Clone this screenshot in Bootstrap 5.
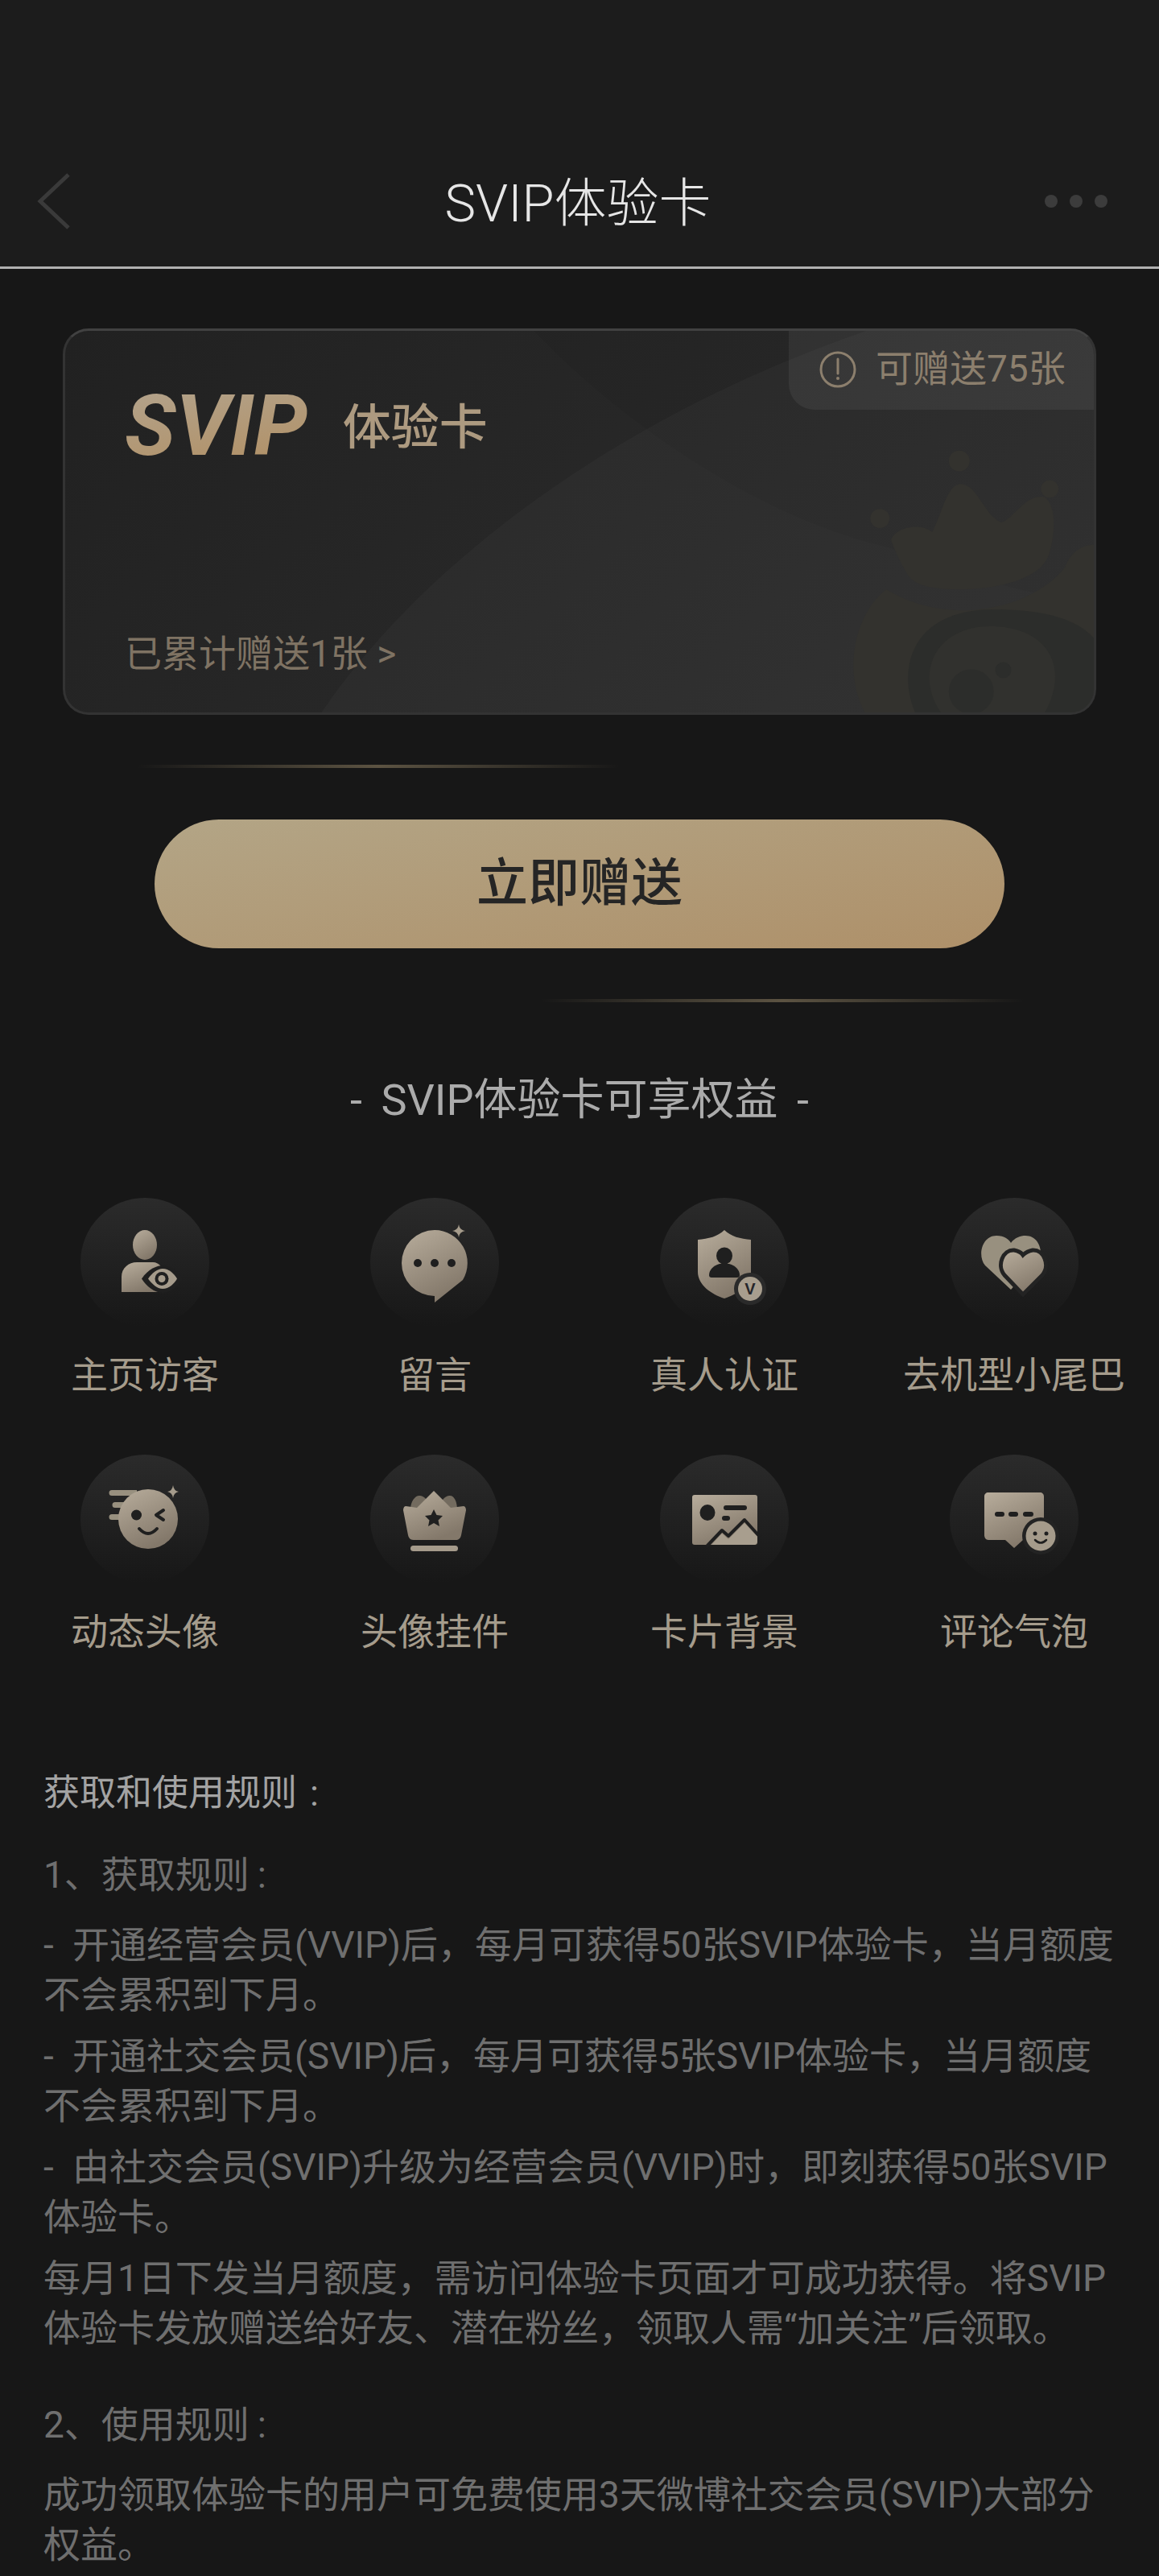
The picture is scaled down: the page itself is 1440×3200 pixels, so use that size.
<!DOCTYPE html>
<html lang="zh-CN">
<head>
  <meta charset="UTF-8" />
  <meta name="viewport" content="width=device-width, initial-scale=1" />
  <title>SVIP体验卡</title>
  <link href="https://cdn.jsdelivr.net/npm/bootstrap@5.3.0/dist/css/bootstrap.min.css" rel="stylesheet" />
  <style>
    html, body { background: #171717; }
    body {
      width: 1440px;
      height: 3200px;
      overflow: hidden;
      font-family: Roboto, "Noto Sans CJK SC", sans-serif;
    }

    .top-bar {
      height: 334px;
      padding: 168px 64px 0 46px;
      background: #1c1c1c;
      border-bottom: 3px solid #b0b0b0;
    }
    .top-side { width: 110px; }
    .top-side-end { width: 96px; }
    .top-title { margin-top: 8px; font-size: 65px; font-weight: 300; color: #e6e6e6; line-height: 1; }
    .more-dot { width: 16px; height: 16px; border-radius: 50%; background: #3c3c3c; }
    .more-row { gap: 15px; }

    .gift-card {
      height: 480px;
      margin: 74px 78px 0;
      border: 3px solid #333;
      border-top-color: #414141;
      border-radius: 32px;
      background: linear-gradient(135deg, #212121, #2e2e2e);
      overflow: hidden;
    }
    .card-art { inset: 0; width: 100%; height: 100%; }
    .card-body-in { height: 100%; padding: 0 0 0 74px; }
    .svip-logo {
      font-family: Roboto, sans-serif;
      font-style: italic;
      font-weight: 700;
      font-size: 106px;
      line-height: 1;
      background: linear-gradient(170deg, #b3a48e, #b18f63);
      -webkit-background-clip: text;
      background-clip: text;
      color: transparent;
    }
    .card-name { margin-top: 6px; font-size: 60px; font-weight: 500; color: #ad9a80; line-height: 1; }
    .card-head { margin-top: 65px; gap: 44px; }
    .card-sent { font-size: 46px; color: #7f7363; line-height: 1; margin-top: auto; margin-bottom: 50px; }
    .left-badge {
      top: -3px;
      right: -3px;
      width: 382px;
      height: 101px;
      padding-left: 38px;
      gap: 24px;
      background: rgba(255, 255, 255, .06);
      border-radius: 0 32px 0 32px;
      font-size: 46px;
      color: #8c7f6d;
    }

    .gold-rule { height: 4px; width: 600px; background: linear-gradient(90deg, transparent, #5c5342, transparent); }
    .rule-one { margin: 62px 0 0 170px; }
    .rule-two { margin: 63px 0 0 672px; }

    .send-btn {
      display: block;
      width: 1056px;
      height: 160px;
      margin: 64px 0 0 192px;
      border: 0;
      border-radius: 80px;
      background: linear-gradient(170deg, #b3a586, #ae9069);
      font-size: 64px;
      font-weight: 500;
      color: #252525;
    }

    .perks-title { margin-top: 95px; font-size: 54px; line-height: 1; color: #ababab; word-spacing: 10px; }
    .perk-grid { display: grid; grid-template-columns: repeat(4, 360px); grid-auto-rows: 319px; margin-top: 94px; }
    .perk-disc {
      width: 160px;
      height: 160px;
      border-radius: 50%;
      background: linear-gradient(180deg, #2b2b2b, #171717);
    }
    .perk-name { margin-top: 33px; font-size: 46px; line-height: 1.2; color: #a59c8c; white-space: nowrap; }

    .rules { padding: 0 0 0 54px; margin-top: 71px; font-size: 46px; line-height: 62px; color: #6f6f6f; white-space: nowrap; word-spacing: 12px; }
    .rules-title { color: #a3a3a3; font-size: 45px; }
    .rules p { margin: 0; }
    .colon-gap { margin-left: 10px; }
    .rules-title .colon-gap { margin-left: 16px; }
    .gap-a { margin-top: 39px !important; }
    .gap-b { margin-top: 25px !important; }
    .gap-c { margin-top: 14px !important; }
    .gap-d { margin-top: 58px !important; }
  </style>
</head>
<body>

  <svg width="0" height="0" class="position-absolute">
    <defs>
      <linearGradient id="gold" x1="0" y1="0" x2="0.5" y2="1">
        <stop offset="0" stop-color="#b8ad9c" />
        <stop offset="1" stop-color="#83786a" />
      </linearGradient>
    </defs>
  </svg>

  <header class="top-bar d-flex justify-content-between align-items-center">
    <div class="top-side">
      <svg width="42" height="72" viewBox="0 0 42 72" class="d-block"><path d="M39 3 L4 36 L39 69" fill="none" stroke="#3a3a3a" stroke-width="5" /></svg>
    </div>
    <div class="top-title">SVIP体验卡</div>
    <div class="top-side-end d-flex justify-content-end more-row">
      <span class="more-dot"></span><span class="more-dot"></span><span class="more-dot"></span>
    </div>
  </header>

  <section class="gift-card position-relative">
    <svg class="card-art position-absolute" viewBox="0 0 1284 478" preserveAspectRatio="none">
      <path d="M320 478 C440 300 680 110 1000 0 L1284 0 L1284 478 Z" fill="#fff" fill-opacity=".028" />
      <path d="M585 0 C680 100 850 230 1030 272 C1130 310 1220 335 1284 340 L1284 0 Z" fill="#000" fill-opacity=".04" />
      <g fill="#33322e">
        <circle cx="1116" cy="163" r="13" />
        <circle cx="1229" cy="198" r="11" />
        <circle cx="1017" cy="235" r="12" />
        <path d="M1031 262 C1036 246 1068 240 1082 252 C1094 232 1100 194 1116 192 C1138 190 1146 230 1168 240 C1182 238 1198 204 1222 208 C1240 220 1234 262 1228 280 C1218 310 1170 322 1120 324 C1080 324 1060 318 1052 306 C1044 292 1036 278 1031 262 Z" />
        <path d="M998 478 C968 420 990 350 1025 324 C1045 336 1080 352 1130 350 C1190 346 1230 320 1248 296 C1256 276 1270 268 1284 268 L1284 478 Z" />
      </g>
      <path d="M1061 478 C1040 430 1050 350 1158 349 C1220 349 1262 360 1284 385 L1284 478 Z" fill="#2c2d2b" />
      <path d="M1093 478 C1060 430 1085 370 1155 370 C1225 370 1255 420 1223 478 Z" fill="#31312e" />
      <circle cx="1131" cy="452" r="28" fill="#2c2d2b" />
      <circle cx="1171" cy="425" r="10" fill="#2c2d2b" />
    </svg>

    <div class="left-badge position-absolute d-flex align-items-center">
      <svg width="46" height="46" viewBox="0 0 46 46" class="flex-shrink-0">
        <circle cx="23" cy="23" r="21" fill="none" stroke="#8c7f6d" stroke-width="3" />
        <path d="M23 10 V28" stroke="#8c7f6d" stroke-width="3" stroke-linecap="round" />
        <circle cx="23" cy="34" r="2" fill="#8c7f6d" />
      </svg>
      <span>可赠送75张</span>
    </div>

    <div class="card-body-in position-relative d-flex flex-column">
      <div class="card-head d-flex align-items-center">
        <span class="svip-logo">SVIP</span>
        <span class="card-name">体验卡</span>
      </div>
      <div class="card-sent">已累计赠送1张 &gt;</div>
    </div>
  </section>

  <div class="gold-rule rule-one"></div>
  <button class="send-btn" type="button">立即赠送</button>
  <div class="gold-rule rule-two"></div>

  <h2 class="perks-title fw-normal text-center">- SVIP体验卡可享权益 -</h2>

  <div class="perk-grid">
    <div class="d-flex flex-column align-items-center">
      <div class="perk-disc">
        <svg width="160" height="160" viewBox="0 0 160 160">
          <ellipse cx="80" cy="58.500" rx="15" ry="18.500" fill="url(#gold)" />
          <path d="M51 117 V98 C51 87 60 80 70 80 H90 C98 80 104 88 104 98 V117 Z" fill="url(#gold)" />
          <path d="M76 100.500 C84 88 96 84 102 84 C112 84 122 92 127 100.500 C122 110 112 118 102 118 C92 118 82 110 76 100.500 Z" fill="#1f1f1f" />
          <path d="M84 100.500 C89 93 96 88 102 88 C110 88 116 94 120 100.500 C116 107 110 113 102 113 C95 113 89 107 84 100.500 Z" fill="#a59b8b" />
          <circle cx="101" cy="100.500" r="8.500" fill="#1f1f1f" />
          <circle cx="101" cy="100.500" r="4.500" fill="#a59b8b" />
        </svg>
      </div>
      <div class="perk-name">主页访客</div>
    </div>

    <div class="d-flex flex-column align-items-center">
      <div class="perk-disc">
        <svg width="160" height="160" viewBox="0 0 160 160">
          <path d="M80 40 A41 41 0 0 1 115 102 L80 130 V122 A41 41 0 0 1 80 40 Z" fill="url(#gold)" />
          <circle cx="59" cy="81" r="5" fill="#1f1f1f" />
          <circle cx="80" cy="81" r="5" fill="#1f1f1f" />
          <circle cx="101" cy="81" r="5" fill="#1f1f1f" />
          <path d="M110 33 Q111 40 118 41 Q111 42 110 49 Q109 42 102 41 Q109 40 110 33 Z" fill="#a59b8b" />
        </svg>
      </div>
      <div class="perk-name">留言</div>
    </div>

    <div class="d-flex flex-column align-items-center">
      <div class="perk-disc">
        <svg width="160" height="160" viewBox="0 0 160 160">
          <path d="M80 40 C88 48 100 51 113 52 V92 C113 108 96 120 80 125 C64 120 47 108 47 92 V52 C60 51 72 48 80 40 Z" fill="url(#gold)" />
          <ellipse cx="80" cy="72" rx="10" ry="10.500" fill="#1f1f1f" />
          <path d="M61 96 C61 90 66 84 74 82 H86 C94 84 99 90 99 96 C99 98 98 99 96 99 H64 C62 99 61 98 61 96 Z" fill="#1f1f1f" />
          <circle cx="112" cy="113" r="20" fill="#2a2a2a" />
          <circle cx="112" cy="113" r="15" fill="#a89e8e" />
          <text x="112" y="120" text-anchor="middle" font-family="Liberation Sans, sans-serif" font-weight="700" font-size="20" fill="#26262a">V</text>
        </svg>
      </div>
      <div class="perk-name">真人认证</div>
    </div>

    <div class="d-flex flex-column align-items-center">
      <div class="perk-disc">
        <svg width="160" height="160" viewBox="0 0 160 160">
          <path d="M76 114 L44 84 C34 72 40 47 58 47 C68 47 74 52 76 56 C79 52 85 47 94 47 C108 47 114 60 113 72 Z" fill="#98907f" />
          <path d="M91 120 L68 96 C58 84 66 64 80 65 C85 66 89 68 91 71 C94 68 98 66 103 65 C117 64 125 84 115 96 Z" fill="url(#gold)" stroke="#232323" stroke-width="5" />
        </svg>
      </div>
      <div class="perk-name">去机型小尾巴</div>
    </div>

    <div class="d-flex flex-column align-items-center">
      <div class="perk-disc">
        <svg width="160" height="160" viewBox="0 0 160 160">
          <path d="M39 44 H70 V51 H39 A3.500 3.500 0 0 1 39 44 Z M43 59 H60 V66 H43 A3.500 3.500 0 0 1 43 59 Z M39 74 H60 V81 H39 A3.500 3.500 0 0 1 39 74 Z" fill="#98907f" />
          <circle cx="84" cy="80" r="37" fill="url(#gold)" />
          <circle cx="69.500" cy="75" r="6.500" fill="#1f1f1f" />
          <path d="M103 69 L94 75 L103 81" fill="none" stroke="#1f1f1f" stroke-width="4" stroke-linecap="round" stroke-linejoin="round" />
          <path d="M73 92 Q84 104 95 92" fill="none" stroke="#1f1f1f" stroke-width="4" stroke-linecap="round" />
          <path d="M115 38 Q116 45 122 46 Q116 47 115 54 Q114 47 108 46 Q114 45 115 38 Z" fill="#a59b8b" />
        </svg>
      </div>
      <div class="perk-name">动态头像</div>
    </div>

    <div class="d-flex flex-column align-items-center">
      <div class="perk-disc">
        <svg width="160" height="160" viewBox="0 0 160 160">
          <path d="M50 68 C50 58 56 50 62 51 C68 52 72 58 74 62 H86 C88 58 92 52 98 51 C104 50 108 58 108 68 Z" fill="#736b5f" />
          <path d="M44 64 L58 66 L79 45 L100 66 L116 64 C118 64 119 67 119 69 L113 100 C112 104 110 106 106 106 H54 C50 106 48 104 47 100 L41 69 C41 67 42 64 44 64 Z" fill="url(#gold)" />
          <path d="M79 68 L82.500 75 L90 76 L84.500 81.500 L86 89 L79 85 L72 89 L73.500 81.500 L68 76 L75.500 75 Z" fill="#1f1f1f" />
          <rect x="50" y="113" width="59" height="7" rx="3.500" fill="#a59b8b" />
        </svg>
      </div>
      <div class="perk-name">头像挂件</div>
    </div>

    <div class="d-flex flex-column align-items-center">
      <div class="perk-disc">
        <svg width="160" height="160" viewBox="0 0 160 160">
          <rect x="40" y="50" width="81" height="62" rx="3" fill="url(#gold)" />
          <ellipse cx="59" cy="72" rx="9.500" ry="10" fill="#1f1f1f" />
          <rect x="79" y="63" width="29" height="6" rx="3" fill="#1f1f1f" />
          <rect x="77" y="76" width="10" height="6" rx="3" fill="#1f1f1f" />
          <path d="M58 114 L77 94 L85 101 L105 81 L124 102" fill="none" stroke="#1f1f1f" stroke-width="4" stroke-linejoin="round" />
          <path d="M64 112 L77 98 L85 105 L105 85 L121 102 V108 C121 110 119 112 117 112 Z" fill="#a89e8e" />
        </svg>
      </div>
      <div class="perk-name">卡片背景</div>
    </div>

    <div class="d-flex flex-column align-items-center">
      <div class="perk-disc">
        <svg width="160" height="160" viewBox="0 0 160 160">
          <path d="M48 47 H112 C115 47 117 49 117 52 V100 C117 103 115 106 112 106 H91 L80 116 L69 106 H48 C45 106 43 103 43 100 V52 C43 49 45 47 48 47 Z" fill="url(#gold)" />
          <rect x="56" y="71" width="12" height="6" rx="3" fill="#1f1f1f" />
          <rect x="73" y="71" width="12" height="6" rx="3" fill="#1f1f1f" />
          <rect x="91" y="71" width="13" height="6" rx="3" fill="#1f1f1f" />
          <circle cx="113" cy="101" r="23" fill="#232323" />
          <circle cx="113" cy="101" r="18.500" fill="#a59b8b" />
          <circle cx="106" cy="98" r="2.500" fill="#1f1f1f" />
          <circle cx="120" cy="98" r="2.500" fill="#1f1f1f" />
          <path d="M106 106 Q113 113 120 106" fill="none" stroke="#1f1f1f" stroke-width="2.500" stroke-linecap="round" />
        </svg>
      </div>
      <div class="perk-name">评论气泡</div>
    </div>
  </div>

  <section class="rules">
    <p class="rules-title">获取和使用规则<span class="colon-gap">:</span></p>
    <p class="gap-a">1、获取规则<span class="colon-gap">:</span></p>
    <p class="gap-b">- 开通经营会员(VVIP)后，每月可获得50张SVIP体验卡，当月额度<br />不会累积到下月。</p>
    <p class="gap-c">- 开通社交会员(SVIP)后，每月可获得5张SVIP体验卡，当月额度<br />不会累积到下月。</p>
    <p class="gap-c">- 由社交会员(SVIP)升级为经营会员(VVIP)时，即刻获得50张SVIP<br />体验卡。</p>
    <p class="gap-c">每月1日下发当月额度，需访问体验卡页面才可成功获得。将SVIP<br />体验卡发放赠送给好友、潜在粉丝，领取人需“加关注”后领取。</p>
    <p class="gap-d">2、使用规则<span class="colon-gap">:</span></p>
    <p class="gap-b">成功领取体验卡的用户可免费使用3天微博社交会员(SVIP)大部分<br />权益。</p>
  </section>

  <script src="https://cdn.jsdelivr.net/npm/bootstrap@5.3.0/dist/js/bootstrap.bundle.min.js"></script>
</body>
</html>
